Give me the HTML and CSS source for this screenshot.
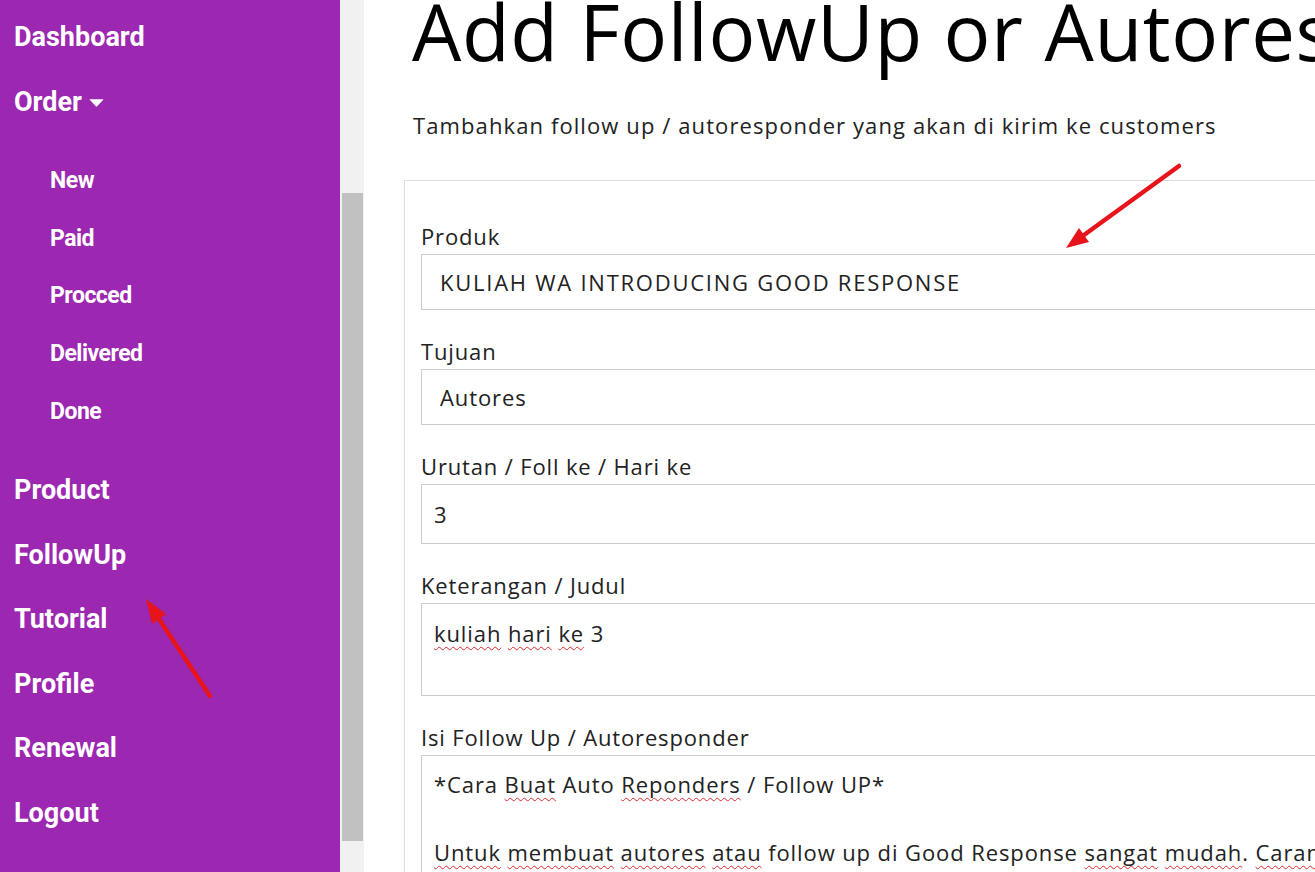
FILE: index.html
```html
<!DOCTYPE html>
<html lang="id">
<head>
<meta charset="utf-8">
<title>Add FollowUp or Autoresponder</title>
<link rel="stylesheet" href="styles.css">
</head>
<body>
<div class="layout">
  <aside class="sidebar">
    <nav class="nav">
      <a class="nav-item" href="#">Dashboard</a>
      <a class="nav-item" href="#">Order<svg class="caret" viewBox="0 0 15 8" width="15" height="8"><path d="M1.2 0.2 H13.8 Q14.9 0.2 14.1 1 L8.2 7.3 Q7.5 8 6.8 7.3 L0.9 1 Q0.1 0.2 1.2 0.2 Z" fill="#fff"/></svg></a>
      <div class="submenu">
        <a class="sub-item" href="#">New</a>
        <a class="sub-item" href="#">Paid</a>
        <a class="sub-item" href="#">Procced</a>
        <a class="sub-item" href="#">Delivered</a>
        <a class="sub-item" href="#">Done</a>
      </div>
      <a class="nav-item" href="#">Product</a>
      <a class="nav-item" href="#">FollowUp</a>
      <a class="nav-item" href="#">Tutorial</a>
      <a class="nav-item" href="#">Profile</a>
      <a class="nav-item" href="#">Renewal</a>
      <a class="nav-item" href="#">Logout</a>
    </nav>
    <div class="scroll-track"><div class="scroll-thumb"></div></div>
  </aside>

  <main class="main">
    <div class="container">
      <h1 class="title">Add FollowUp or Autoresponder</h1>
      <p class="subtitle">Tambahkan follow up / autoresponder yang akan di kirim ke customers</p>

      <div class="card">
        <div class="group">
          <div class="label">Produk</div>
          <div class="field field-select caps">KULIAH WA INTRODUCING GOOD RESPONSE</div>
        </div>
        <div class="group">
          <div class="label">Tujuan</div>
          <div class="field field-select">Autores</div>
        </div>
        <div class="group">
          <div class="label">Urutan / Foll ke / Hari ke</div>
          <div class="field field-input">3</div>
        </div>
        <div class="group">
          <div class="label">Keterangan / Judul</div>
          <div class="field field-area area-short"><span class="sp">kuliah</span> <span class="sp">hari</span> <span class="sp">ke</span> 3</div>
        </div>
        <div class="group">
          <div class="label">Isi Follow Up / Autoresponder</div>
          <div class="field field-area area-long">
            <div class="line">*Cara <span class="sp">Buat</span> Auto <span class="sp">Reponders</span> / Follow UP*</div>
            <div class="line">&nbsp;</div>
            <div class="line"><span class="sp">Untuk</span> <span class="sp">membuat</span> <span class="sp">autores</span> <span class="sp">atau</span> follow up di Good Response <span class="sp">sangat</span> <span class="sp">mudah</span>. <span class="sp">Caranya</span> adalah</div>
          </div>
        </div>
      </div>
    </div>
  </main>
</div>

<svg class="annotations" width="1315" height="872" viewBox="0 0 1315 872">
  <line x1="1179" y1="166" x2="1084" y2="235" stroke="#e8141b" stroke-width="4.5" stroke-linecap="round"/>
  <polygon points="1066,248 1089,242 1079,228" fill="#e8141b"/>
  <line x1="210" y1="696" x2="159" y2="619" stroke="#e8141b" stroke-width="4.5" stroke-linecap="round"/>
  <polygon points="146,599 166,614 152,624" fill="#e8141b"/>
</svg>
</body>
</html>
```

FILE: styles.css
```css
* {
  box-sizing: border-box;
}

html, body {
  margin: 0;
  padding: 0;
  width: 1315px;
  height: 872px;
  overflow: hidden;
  background: #ffffff;
}

body {
  position: relative;
  font-family: "Open Sans", "Liberation Sans", sans-serif;
  color: #222222;
}

.layout {
  display: flex;
  height: 872px;
}

/* Sidebar */
.sidebar {
  display: flex;
  flex: 0 0 364px;
  height: 872px;
}

.nav {
  flex: 0 0 340px;
  background: #9c27b0;
  padding-top: 5px;
  font-family: Roboto, "Liberation Sans", sans-serif;
  font-weight: 700;
}

.nav-item {
  display: flex;
  align-items: center;
  height: 64.6px;
  padding-left: 14px;
  color: #ffffff;
  text-decoration: none;
  font-size: 27px;
  letter-spacing: 0;
}

.caret {
  margin-left: 7px;
  margin-top: 2px;
}

.submenu {
  padding: 17.5px 0;
}

.sub-item {
  display: flex;
  align-items: center;
  height: 57.7px;
  padding-left: 50px;
  color: #ffffff;
  text-decoration: none;
  font-size: 23px;
  letter-spacing: -0.5px;
}

.scroll-track {
  flex: 0 0 24px;
  background: #f1f1f1;
  padding: 193px 1px 0 2px;
}

.scroll-thumb {
  height: 648px;
  background: #c1c1c1;
}

/* Main */
.main {
  flex: 1 1 auto;
  min-width: 0;
  padding-left: 40px;
  overflow: hidden;
}

.container {
  width: 1060px;
}

.title {
  margin: -8px 0 0 8px;
  font-size: 78px;
  line-height: 78px;
  font-weight: 400;
  letter-spacing: 0.6px;
  color: #000000;
  white-space: nowrap;
}

.subtitle {
  margin: 40px 0 0 9px;
  font-size: 22px;
  line-height: 30px;
  letter-spacing: 1.1px;
  color: #222222;
  white-space: nowrap;
}

.card {
  margin-top: 40px;
  border: 1px solid #dddddd;
  border-right: none;
  padding: 43px 0 0 16px;
  height: 760px;
}

.group {
  margin-bottom: 29px;
}

.label {
  font-size: 22px;
  line-height: 25px;
  letter-spacing: 0.85px;
  margin-bottom: 5px;
  color: #222222;
  white-space: nowrap;
}

.field {
  border: 1px solid #cccccc;
  border-right: none;
  background: #ffffff;
  font-size: 22px;
  letter-spacing: 0.9px;
  color: #222222;
  white-space: nowrap;
  overflow: hidden;
}

.field-select {
  display: flex;
  align-items: center;
  height: 56px;
  padding-left: 18px;
}

.caps {
  letter-spacing: 1.75px;
}

.field-input {
  display: flex;
  align-items: center;
  height: 60px;
  padding-left: 12px;
}

.field-area {
  padding: 12px 0 0 12px;
  line-height: 34px;
}

.area-short {
  height: 93px;
  padding-top: 12px;
}

.area-long {
  height: 200px;
  padding-top: 11px;
}

.sp {
  text-decoration: underline wavy #e0282e;
  text-decoration-thickness: 1px;
  text-underline-offset: 4px;
  text-decoration-skip-ink: none;
}

.annotations {
  position: absolute;
  left: 0;
  top: 0;
  pointer-events: none;
}
```
